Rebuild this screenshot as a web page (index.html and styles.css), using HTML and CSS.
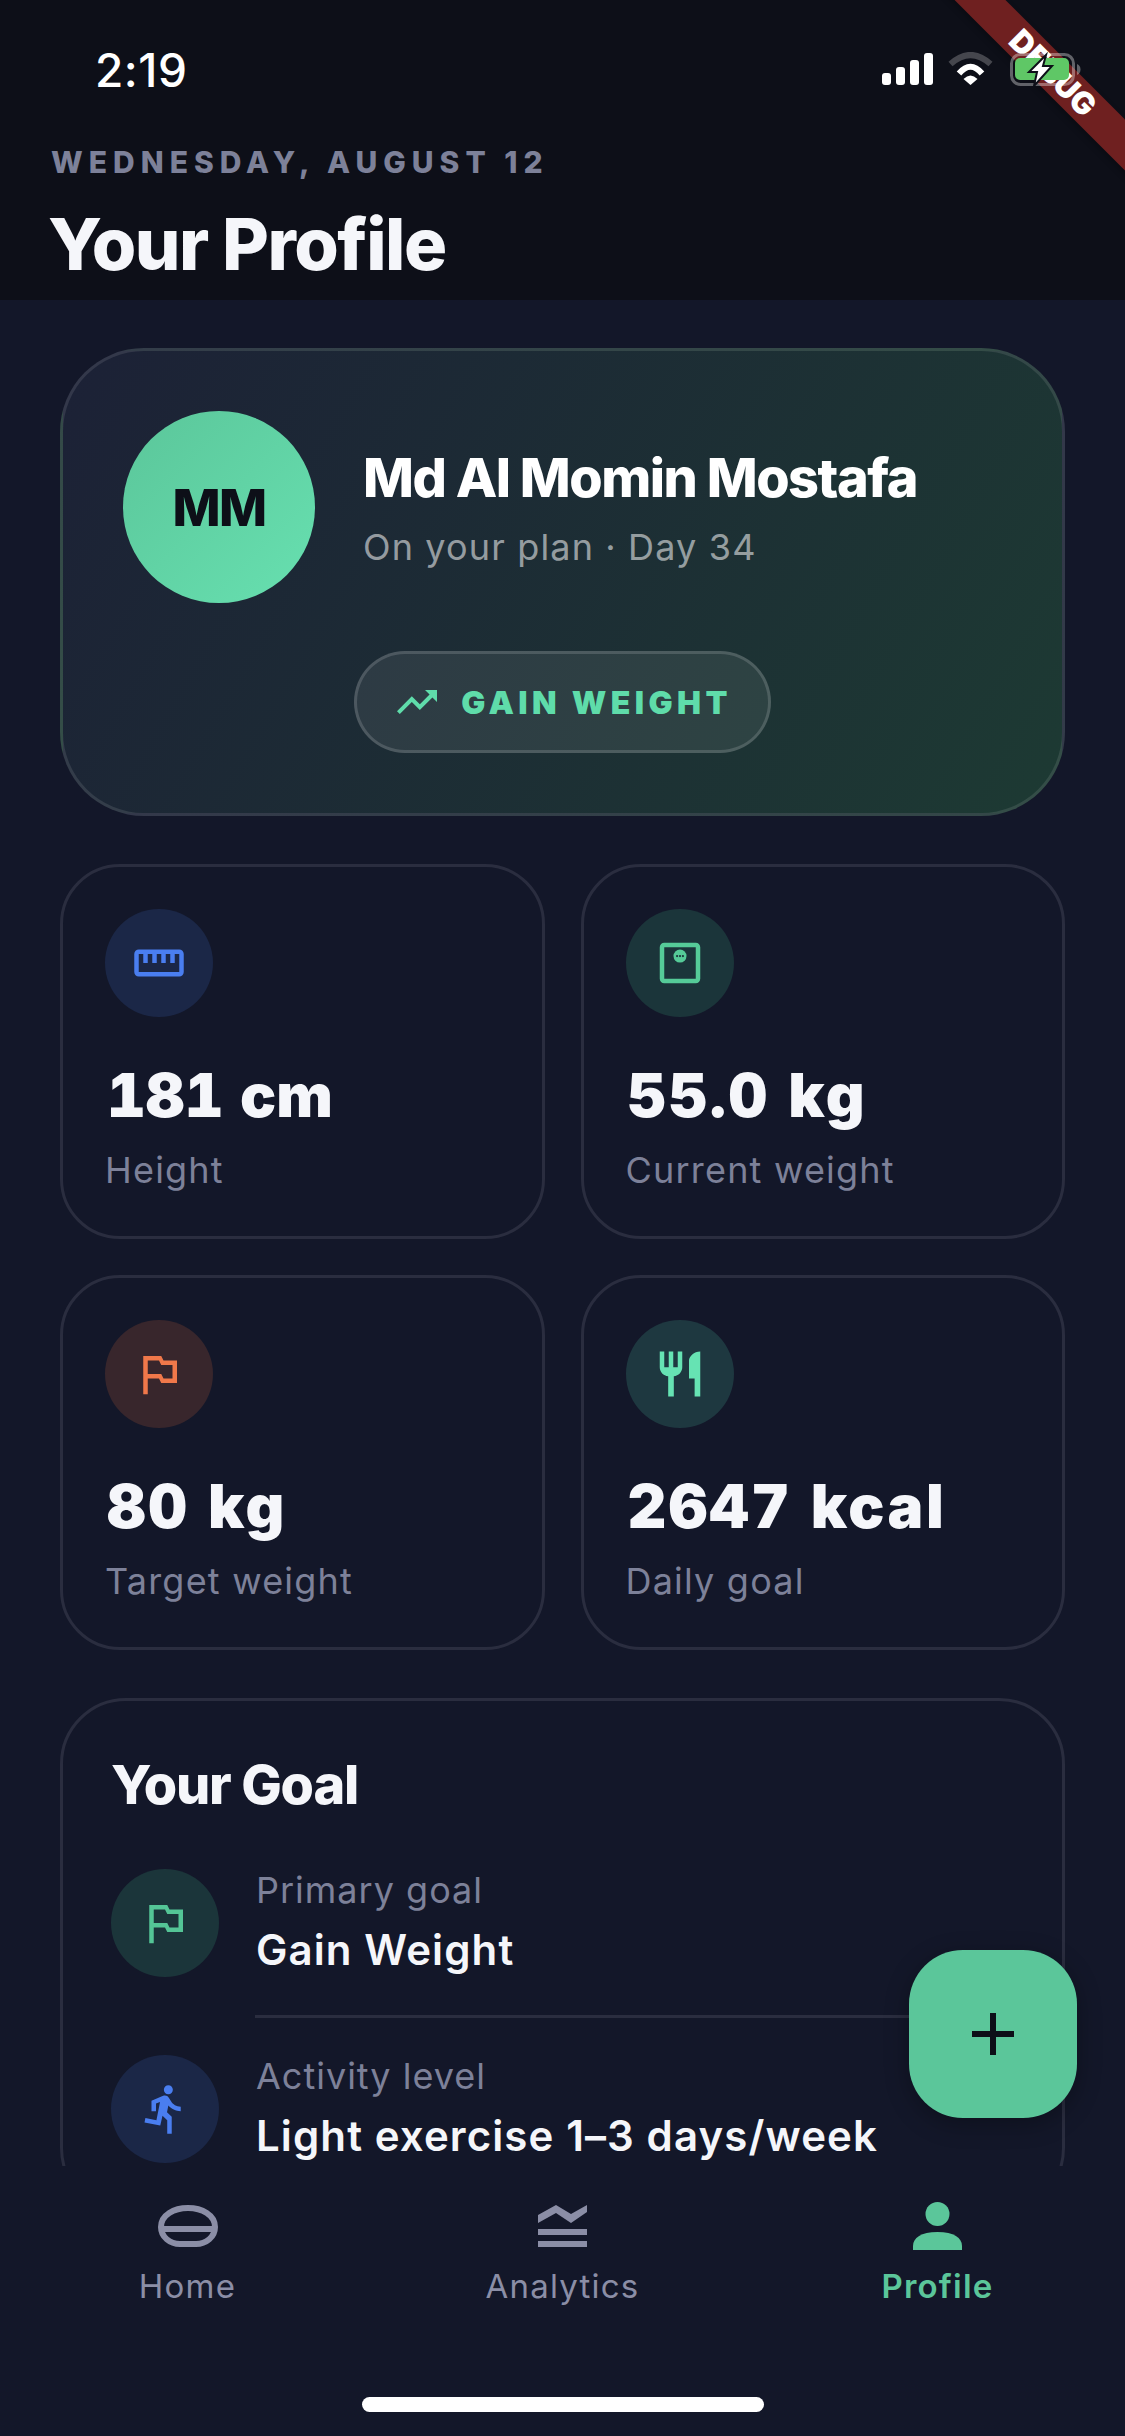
FILE: index.html
```html
<!DOCTYPE html>
<html lang="en">
    <head>
        <meta charset="UTF-8" />
        <title>Your Profile</title>
        <link rel="stylesheet" href="styles.css">
    </head>
    <body>
        <div class="page">
            <div class="debug-banner"><span>DEBUG</span></div>

            <header class="header">
                <div class="status-bar">
                    <span class="status-time">2:19</span>
                    <svg class="status-icons" width="200" height="34" viewBox="0 0 200 34">
                        <rect x="0" y="21" width="9" height="12" rx="3" fill="#fff" />
                        <rect x="14" y="15" width="9" height="18" rx="3" fill="#fff" />
                        <rect x="28" y="8" width="9" height="25" rx="3" fill="#fff" />
                        <rect x="42" y="1" width="9" height="32" rx="3" fill="#fff" />
                        <path d="M68.5 12Q88.5-6 108.5 12" fill="none" stroke="#45464d" stroke-width="6" />
                        <path d="M77 21.5Q88.5 8 100 21.500" fill="none" stroke="#fff" stroke-width="6" />
                        <path d="M81.5 27Q88.5 20 95.5 27L88.5 33Z" fill="#fff" />
                        <rect x="129.5" y="2.5" width="62" height="30" rx="9" fill="none" stroke="#fff" stroke-opacity=".35" stroke-width="3" />
                        <path d="M195 12c2.500 1 3.500 3 3.500 5.500s-1 4.500-3.500 5.500z" fill="#fff" fill-opacity=".35" />
                        <rect x="133" y="6" width="54" height="22" rx="5" fill="#5fc766" />
                        <path d="M164 3L147 20H155L152 34L170 14H161Z" fill="#fff" stroke="#0d0f18" stroke-width="2" />
                    </svg>
                </div>
                <div class="header-date">WEDNESDAY, AUGUST 12</div>
                <h1 class="header-title">Your Profile</h1>
            </header>

            <main class="content">
                <section class="hero">
                    <div class="hero-top">
                        <div class="avatar">MM</div>
                        <div class="hero-text">
                            <div class="hero-name">Md Al Momin Mostafa</div>
                            <div class="hero-sub">On your plan · Day 34</div>
                        </div>
                    </div>
                    <div class="pill">
                        <svg width="48" height="48" viewBox="0 0 24 24" fill="#5fdcaa"><path d="M16 6l2.290 2.290-4.880 4.880-4-4L2 16.590 3.410 18l6-6 4 4 6.300-6.290L22 12V6z" /></svg>
                        <span>GAIN WEIGHT</span>
                    </div>
                </section>

                <section class="stats">
                    <div class="stat">
                        <div class="circle circle-blue">
                            <svg width="54" height="54" viewBox="0 0 24 24" fill="#4a7ef0"><path d="M21 6H3c-1.100 0-2 .9-2 2v8c0 1.100.9 2 2 2h18c1.100 0 2-.9 2-2V8c0-1.100-.9-2-2-2zm0 10H3V8h2v4h2V8h2v4h2V8h2v4h2V8h2v4h2V8h2v8z" /></svg>
                        </div>
                        <div class="stat-value stat-value-tight">181 cm</div>
                        <div class="stat-label">Height</div>
                    </div>
                    <div class="stat">
                        <div class="circle circle-green">
                            <svg width="54" height="54" viewBox="0 0 24 24" fill="#55cb98"><path d="M19 5v14H5V5h14m0-2H5c-1.100 0-2 .9-2 2v14c0 1.100.9 2 2 2h14c1.100 0 2-.9 2-2V5c0-1.100-.9-2-2-2z" /><circle cx="12" cy="8.900" r="2.900" /><circle cx="10.700" cy="8.900" r=".5" fill="#1b353c" /><circle cx="12" cy="8.900" r=".5" fill="#1b353c" /><circle cx="13.300" cy="8.900" r=".5" fill="#1b353c" /></svg>
                        </div>
                        <div class="stat-value">55.0 kg</div>
                        <div class="stat-label">Current weight</div>
                    </div>
                    <div class="stat">
                        <div class="circle circle-orange">
                            <svg width="54" height="54" viewBox="0 0 24 24" fill="#f0784a"><path d="M14 6l-1-2H5v17h2v-7h5l1 2h7V6h-6zm4 8h-4l-1-2H7V6h5l1 2h5v6z" /></svg>
                        </div>
                        <div class="stat-value">80 kg</div>
                        <div class="stat-label">Target weight</div>
                    </div>
                    <div class="stat">
                        <div class="circle circle-teal">
                            <svg width="54" height="54" viewBox="0 0 24 24" fill="#66e3b3"><path d="M11 9H9V2H7v7H5V2H3v7c0 2.120 1.660 3.840 3.750 3.970V22h2.500v-9.030C11.340 12.840 13 11.120 13 9V2h-2v7zm5-3v8h2.500v8H21V2c-2.760 0-5 2.240-5 4z" /></svg>
                        </div>
                        <div class="stat-value">2647 kcal</div>
                        <div class="stat-label">Daily goal</div>
                    </div>
                </section>

                <section class="goal">
                    <h2 class="goal-title">Your Goal</h2>
                    <div class="goal-row">
                        <div class="circle circle-green">
                            <svg width="54" height="54" viewBox="0 0 24 24" fill="#54c596"><path d="M14 6l-1-2H5v17h2v-7h5l1 2h7V6h-6zm4 8h-4l-1-2H7V6h5l1 2h5v6z" /></svg>
                        </div>
                        <div class="goal-text">
                            <div class="goal-label">Primary goal</div>
                            <div class="goal-value">Gain Weight</div>
                        </div>
                    </div>
                    <div class="goal-divider"></div>
                    <div class="goal-row">
                        <div class="circle circle-blue">
                            <svg width="54" height="54" viewBox="0 0 24 24" fill="#4a7ef0"><path d="M13.490 5.480c1.100 0 2-.9 2-2s-.9-2-2-2-2 .9-2 2 .9 2 2 2zm-3.600 13.900l1-4.400 2.100 2v6h2v-7.500l-2.100-2 .6-3c1.300 1.500 3.300 2.500 5.500 2.500v-2c-1.900 0-3.500-1-4.300-2.400l-1-1.600c-.4-.6-1-1-1.700-1-.3 0-.5.1-.8.1l-5.200 2.200v4.700h2v-3.400l1.800-.7-1.600 8.100-4.900-1-.4 2 7 1.400z" /></svg>
                        </div>
                        <div class="goal-text">
                            <div class="goal-label">Activity level</div>
                            <div class="goal-value">Light exercise 1–3 days/week</div>
                        </div>
                    </div>
                </section>
            </main>

            <nav class="nav">
                <div class="nav-item">
                    <div class="nav-icon">
                        <svg width="60" height="42" viewBox="0 0 60 42" fill="none" stroke="#8b8ea6" stroke-width="6"><path d="M3 22C3 10 16 3 30 3S57 10 57 22C57 32 48 39 38 39H22C12 39 3 32 3 22Z" /><path d="M3 24H57" /></svg>
                    </div>
                    <span>Home</span>
                </div>
                <div class="nav-item">
                    <div class="nav-icon">
                        <svg width="49" height="42" viewBox="0 0 49 42" fill="#8b8ea6"><path d="M0 10L18 0 33 9 49 0V7L33 18 18 8 0 18Z" /><rect y="24" width="49" height="6" /><rect y="36" width="49" height="6" /></svg>
                    </div>
                    <span>Analytics</span>
                </div>
                <div class="nav-item nav-item-active">
                    <div class="nav-icon">
                        <svg width="49" height="48" viewBox="0 0 49 48" fill="#5bc69a"><circle cx="24.500" cy="12" r="12" /><path d="M0 48V44C0 36 8 30 24.500 30S49 36 49 44V48Z" /></svg>
                    </div>
                    <span>Profile</span>
                </div>
            </nav>

            <div class="home-bar"></div>

            <div class="fab">
                <svg width="42" height="42" viewBox="0 0 42 42" fill="#0d0f18"><rect x="18" width="6" height="42" /><rect y="18" width="42" height="6" /></svg>
            </div>
        </div>
    </body>
</html>
```

FILE: styles.css
```css
* {
    box-sizing: border-box;
}
body {
    margin: 0;
    background-color: #131729;
    font-family: Inter, "Noto Sans", sans-serif;
    color: #f5f6fa;
}
.page {
    position: relative;
    display: flex;
    flex-direction: column;
    width: 1125px;
    height: 2436px;
    overflow: hidden;
    background-color: #131729;
}

/* header */
.header {
    height: 300px;
    flex-shrink: 0;
    padding: 0 0 0 48px;
    background-color: #0d0f18;
}
.status-bar {
    position: relative;
    z-index: 2;
    display: flex;
    justify-content: space-between;
    height: 138px;
    padding: 52px 43px 0 47px;
}
.status-time {
    font-size: 46px;
    font-weight: 500;
    line-height: 36px;
    letter-spacing: 0.5px;
    color: #fff;
}
.header-date {
    padding-left: 3px;
    font-size: 30px;
    font-weight: 800;
    line-height: 48px;
    letter-spacing: 6px;
    color: #7d8199;
}
.header-title {
    margin: 16px 0 0;
    font-size: 72px;
    font-weight: 800;
    line-height: 84px;
    letter-spacing: -1.5px;
}
.debug-banner {
    position: absolute;
    left: 903px;
    top: 55px;
    z-index: 1;
    width: 300px;
    height: 36px;
    background-color: #6f2020;
    box-shadow: 0 3px 6px rgba(0, 0, 0, 0.25);
    transform: rotate(45deg);
    font-size: 31px;
    font-weight: 900;
    line-height: 36px;
    text-align: center;
    color: #fff;
}

/* main */
.content {
    flex: 1;
    min-height: 0;
    overflow: hidden;
    padding: 48px 60px 0;
}
.hero {
    display: flex;
    flex-direction: column;
    align-items: center;
    height: 468px;
    padding: 60px;
    border: 3px solid rgba(255, 255, 255, 0.1);
    border-radius: 84px;
    background: linear-gradient(120deg, #1c2136, #1d3a33);
}
.hero-top {
    display: flex;
    align-items: center;
    align-self: stretch;
    gap: 48px;
}
.avatar {
    display: flex;
    align-items: center;
    justify-content: center;
    flex-shrink: 0;
    width: 192px;
    height: 192px;
    border-radius: 50%;
    background: linear-gradient(135deg, #5bc69a, #67e0b0);
    font-size: 51px;
    font-weight: 800;
    letter-spacing: -1.5px;
    color: #0d0f18;
}
.hero-text {
    margin-top: 4px;
}
.hero-name {
    font-size: 54px;
    font-weight: 800;
    line-height: 62px;
    letter-spacing: -1.5px;
    color: #fff;
}
.hero-sub {
    margin-top: 14px;
    font-size: 36px;
    line-height: 48px;
    letter-spacing: 1.15px;
    color: rgba(255, 255, 255, 0.55);
}
.pill {
    display: flex;
    align-items: center;
    gap: 20px;
    height: 102px;
    margin-top: 48px;
    padding: 0 36px;
    border: 3px solid rgba(255, 255, 255, 0.15);
    border-radius: 51px;
    background-color: rgba(255, 255, 255, 0.08);
    font-size: 32px;
    font-weight: 900;
    letter-spacing: 4.4px;
    color: #5fdcaa;
}

.stats {
    display: grid;
    grid-template-columns: 1fr 1fr;
    gap: 36px;
    margin-top: 48px;
}
.stat {
    height: 375px;
    padding: 42px;
    border: 3px solid #2a2d3f;
    border-radius: 60px;
}
.circle {
    display: flex;
    align-items: center;
    justify-content: center;
    flex-shrink: 0;
    width: 108px;
    height: 108px;
    border-radius: 50%;
}
.circle-blue {
    background-color: #1b2747;
}
.circle-green {
    background-color: #1b353a;
}
.circle-orange {
    background-color: #38262c;
}
.circle-teal {
    background-color: #1e3840;
}
.stat-value {
    margin-top: 42px;
    padding-left: 2px;
    font-size: 60px;
    font-weight: 900;
    font-variant-numeric: tabular-nums;
    line-height: 72px;
    letter-spacing: 2.5px;
}
.stat-value-tight {
    letter-spacing: 0.2px;
}
.stat-label {
    margin-top: 15px;
    font-size: 36px;
    line-height: 48px;
    letter-spacing: 1.2px;
    color: #7d8199;
}

.goal {
    margin-top: 48px;
    padding: 48px;
    border: 3px solid #2a2d3f;
    border-radius: 66px;
}
.goal-title {
    margin: -3px 0 45px;
    font-size: 54px;
    font-weight: 800;
    line-height: 78px;
    letter-spacing: -1.2px;
}
.goal-row {
    display: flex;
    align-items: center;
    gap: 37px;
}
.goal-text {
    margin-top: -3px;
}
.goal-label {
    font-size: 36px;
    line-height: 48px;
    letter-spacing: 1px;
    color: #7d8199;
}
.goal-value {
    margin-top: 9px;
    font-size: 42px;
    font-weight: 600;
    line-height: 54px;
    letter-spacing: 1.1px;
}
.goal-divider {
    height: 3px;
    margin: 38px 0 37px 144px;
    background-color: #2a2d3f;
}

/* bottom nav */
.nav {
    display: grid;
    grid-template-columns: repeat(3, 1fr);
    flex-shrink: 0;
    height: 270px;
    padding-top: 36px;
    background-color: #131729;
}
.nav-item {
    display: flex;
    flex-direction: column;
    align-items: center;
    font-size: 33px;
    font-weight: 400;
    line-height: 42px;
    letter-spacing: 1.2px;
    color: #8b8ea6;
}
.nav-item-active {
    font-weight: 600;
    color: #5bc69a;
}
.nav-icon {
    display: flex;
    align-items: center;
    justify-content: center;
    height: 48px;
    margin-bottom: 15px;
}
.home-bar {
    position: absolute;
    left: 362px;
    bottom: 24px;
    width: 402px;
    height: 15px;
    border-radius: 8px;
    background-color: #fff;
}
.fab {
    position: absolute;
    left: 909px;
    top: 1950px;
    display: flex;
    align-items: center;
    justify-content: center;
    width: 168px;
    height: 168px;
    border-radius: 54px;
    background-color: #5bc69a;
    box-shadow: 0 6px 24px rgba(0, 0, 0, 0.3);
}
```
